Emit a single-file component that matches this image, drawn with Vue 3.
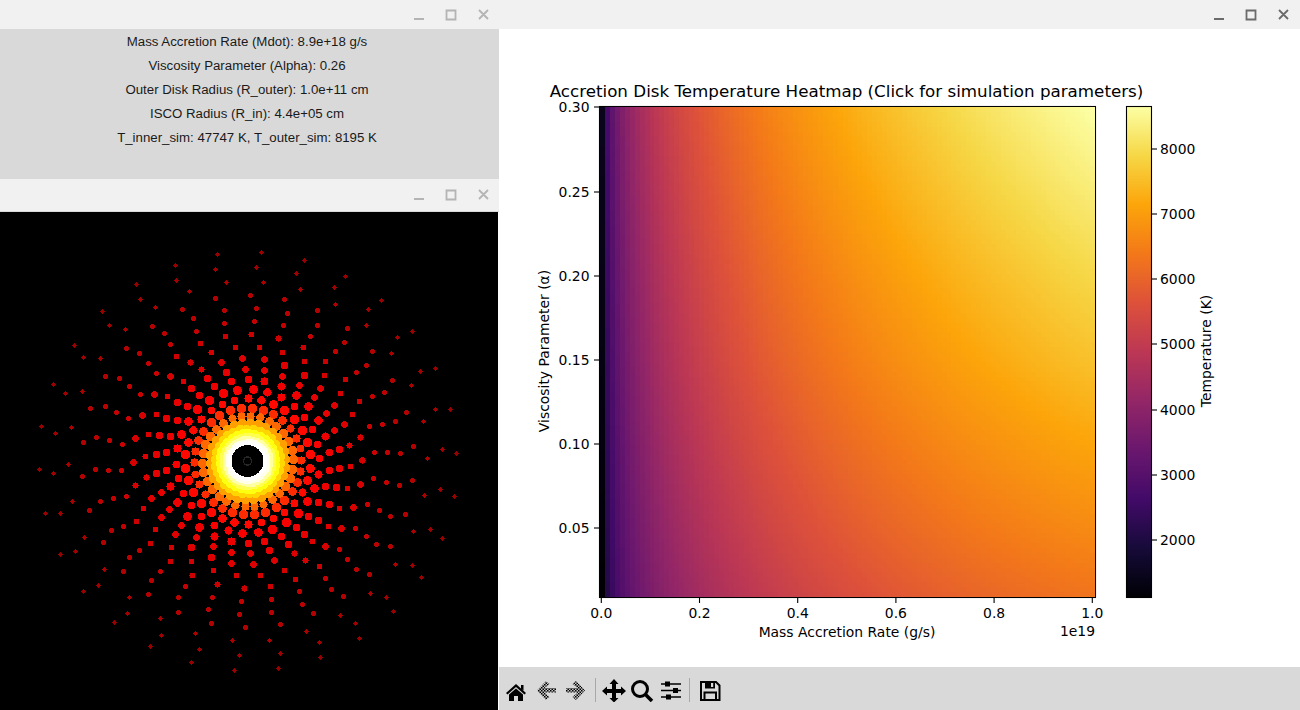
<template>
  <div class="desktop">
    <div class="left-col">
      <section class="window">
        <header class="titlebar">
          <svg class="controls dim" width="80" height="12" viewBox="0 0 80 12">
            <path d="M0 10h10M32.5 1.5h9v9h-9zM65 1l9 9M74 1l-9 9" />
          </svg>
        </header>
        <div class="info">
          <p v-for="line in infoLines" :key="line">{{ line }}</p>
        </div>
      </section>

      <section class="window grow">
        <header class="titlebar second">
          <svg class="controls dim" width="80" height="12" viewBox="0 0 80 12">
            <path d="M0 10h10M32.5 1.5h9v9h-9zM65 1l9 9M74 1l-9 9" />
          </svg>
        </header>
        <div class="disk">
          <svg width="498" height="498" viewBox="0 0 498 498" shape-rendering="crispEdges">
            <circle
              v-for="d in dots"
              :key="d.id"
              :cx="d.x"
              :cy="d.y"
              :r="d.size"
              :fill="d.color"
            />
            <circle cx="247.5" cy="249" r="20" fill="#ffffff" />
            <circle cx="247.5" cy="249" r="16" fill="#000000" />
            <circle cx="247.5" cy="249" r="4" fill="none" stroke="#262626" stroke-width="1.5" />
          </svg>
        </div>
      </section>
    </div>

    <section class="window main">
      <header class="titlebar main-bar">
        <svg class="controls" width="80" height="12" viewBox="0 0 80 12">
          <path d="M0 10h10M32.5 1.5h9v9h-9zM65 1l9 9M74 1l-9 9" />
        </svg>
      </header>

      <div class="figure">
        <svg class="axes" width="801" height="638" viewBox="499 29 801 638">
          <defs>
            <linearGradient id="inferno" x1="0" y1="1" x2="0" y2="0">
              <stop
                v-for="(c, i) in inferno"
                :key="c"
                :offset="i / (inferno.length - 1)"
                :stop-color="c"
              />
            </linearGradient>
          </defs>

          <text class="title" x="846.5" y="97" text-anchor="middle">Accretion Disk Temperature Heatmap (Click for simulation parameters)</text>

          <rect x="599.5" y="106.5" width="496" height="491" fill="none" stroke="#000" stroke-width="1.1" />
          <rect x="1126.5" y="106.5" width="25" height="491" fill="url(#inferno)" stroke="#000" stroke-width="1.1" />

          <g v-for="t in yTicks" :key="t.label">
            <path :d="`M594 ${t.y}h5`" stroke="#000" stroke-width="1.1" />
            <text x="589.5" :y="t.y + 5" text-anchor="end">{{ t.label }}</text>
          </g>
          <g v-for="t in xTicks" :key="t.label">
            <path :d="`M${t.x} 598v5`" stroke="#000" stroke-width="1.1" />
            <text :x="t.x" y="618" text-anchor="middle">{{ t.label }}</text>
          </g>
          <g v-for="t in barTicks" :key="t.label">
            <path :d="`M1152 ${t.y}h5`" stroke="#000" stroke-width="1.1" />
            <text x="1160" :y="t.y + 5" >{{ t.label }}</text>
          </g>

          <text x="847" y="637" text-anchor="middle">Mass Accretion Rate (g/s)</text>
          <text x="1095" y="636" text-anchor="end">1e19</text>
          <text transform="translate(549 351) rotate(-90)" text-anchor="middle">Viscosity Parameter (α)</text>
          <text transform="translate(1211 351) rotate(-90)" text-anchor="middle">Temperature (K)</text>
        </svg>
        <canvas ref="heat" class="heat" width="100" height="100"></canvas>
      </div>

      <footer class="toolbar">
        <svg class="tool home" width="24" height="24" viewBox="0 0 24 24">
          <path d="M12 6 22 15 20.5 16.5 12 9 3.500 16.500 2 15ZM17 7h2.500v5.500L17 10.500Z" />
          <path d="M5 16.500 12 10.500 19 16.500V23H14V18H10V23H5Z" />
        </svg>
        <svg class="tool back" width="24" height="24" viewBox="0 0 24 24">
          <defs>
            <pattern id="dither" width="3" height="3" patternUnits="userSpaceOnUse">
              <rect width="3" height="3" fill="#c4c4c4" />
              <rect width="1.500" height="1.500" fill="#000" />
              <rect x="1.500" y="1.500" width="1.500" height="1.500" fill="#000" />
            </pattern>
          </defs>
          <path fill="url(#dither)" d="M2 12.500 11 3 14.500 6 9.500 10H21V14.500H9.500L14.500 19 11 22Z" />
        </svg>
        <svg class="tool" width="24" height="24" viewBox="0 0 24 24">
          <path fill="url(#dither)" d="M22 12.500 13 3 9.500 6 14.500 10H3V14.500H14.500L9.500 19 13 22Z" />
        </svg>
        <span class="sep"></span>
        <svg class="tool move" width="24" height="24" viewBox="0 0 24 24">
          <path d="M12 1 16.500 6H14V11H19V8.500L24 13 19 17.500V15H14V20H16.500L12 24.500 7.500 20H10V15H5V17.500L0 13 5 8.500V11H10V6H7.500Z" />
        </svg>
        <svg class="tool zoom" width="24" height="24" viewBox="0 0 24 24">
          <circle cx="10" cy="11" r="7.500" fill="none" stroke="#000" stroke-width="3" />
          <path d="M15.500 16.500 22 23" stroke="#000" stroke-width="3.600" />
        </svg>
        <svg class="tool subplots" width="24" height="24" viewBox="0 0 24 24">
          <path d="M2 6h20M2 12.500h20M2 19h20" stroke="#000" stroke-width="1.300" />
          <rect x="6" y="3.500" width="5" height="5" />
          <rect x="14" y="10" width="5" height="5" />
          <rect x="7" y="16.500" width="5" height="5" />
        </svg>
        <span class="sep second-sep"></span>
        <svg class="tool save" width="24" height="24" viewBox="0 0 24 24">
          <path fill="none" stroke="#000" stroke-width="2" d="M3 4H18L21.500 7.500V22H3Z" />
          <path d="M7 3.500H17V10.500H7Z" />
          <rect x="13" y="5" width="2.200" height="4" fill="#d9d9d9" />
          <path fill="none" stroke="#000" stroke-width="2" d="M6.500 22V14.500H18V22" />
        </svg>
      </footer>
    </section>
  </div>
</template>

<script setup>
import { onMounted, ref } from 'vue'

const infoLines = [
  'Mass Accretion Rate (Mdot): 8.9e+18 g/s',
  'Viscosity Parameter (Alpha): 0.26',
  'Outer Disk Radius (R_outer): 1.0e+11 cm',
  'ISCO Radius (R_in): 4.4e+05 cm',
  'T_inner_sim: 47747 K, T_outer_sim: 8195 K'
]

const inferno = [
  '#000004', '#160b39', '#420a68', '#6a176e', '#932667', '#bc3754',
  '#dd513a', '#f37819', '#fca50a', '#f6d746', '#fcffa4'
]

const yTicks = [
  { label: '0.30', y: 107 },
  { label: '0.25', y: 192 },
  { label: '0.20', y: 276 },
  { label: '0.15', y: 360 },
  { label: '0.10', y: 444 },
  { label: '0.05', y: 528 }
]
const xTicks = ['0.0', '0.2', '0.4', '0.6', '0.8', '1.0'].map((label, i) => ({
  label,
  x: 601.3 + i * 98.2
}))
const barTicks = [2000, 3000, 4000, 5000, 6000, 7000, 8000].map((v) => ({
  label: String(v),
  y: Math.round(540 - ((v - 2000) / 1000) * 65.2)
}))

// radius and angular offset of each ring, read off the reference; 30 dots every 12deg
const rings = [
  [209, 9.7], [194.5, 8.4], [180, 11], [166, 6.7], [153, 9], [140, 8.5],
  [127, 7.8], [114.7, 11.7], [103, 3], [92, 4.2], [81.7, 6], [72, 10],
  [62.7, 6], [53.6, 10.5], [45.5, 9.5], [38, 9.5], [32.5, 4], [28, 8],
  [24, 2], [21, 7], [18, 3]
]

const colorStops = [
  [17, [255, 255, 255]], [20, [255, 255, 192]], [24, [255, 255, 80]],
  [29, [255, 255, 0]], [33, [255, 208, 0]], [38, [255, 160, 0]],
  [46, [255, 100, 0]], [54, [255, 40, 0]], [65, [255, 0, 0]],
  [80, [240, 0, 0]], [100, [224, 0, 0]], [127, [204, 0, 0]],
  [166, [179, 0, 0]], [209, [153, 0, 0]]
]

const ringColor = (r) => {
  for (let i = 1; i < colorStops.length; i++) {
    const [r1, c1] = colorStops[i]
    if (r <= r1) {
      const [r0, c0] = colorStops[i - 1]
      const t = Math.max(0, (r - r0) / (r1 - r0))
      const c = c0.map((v, k) => Math.round(v + (c1[k] - v) * t))
      return `rgb(${c[0]},${c[1]},${c[2]})`
    }
  }
  return 'rgb(153,0,0)'
}

const ringSize = (r) => {
  if (r < 40) return 4.6
  if (r < 72) return 4.6 - ((r - 40) / 32) * 0.4
  if (r < 103) return 4.2 - ((r - 72) / 31) * 1
  if (r < 140) return 3.2 - ((r - 103) / 37) * 0.7
  return 2.5 - ((r - 140) / 69) * 0.4
}

const dots = []
rings.forEach(([r, offset], ring) => {
  for (let i = 0; i < 30; i++) {
    const a = ((offset + i * 12) * Math.PI) / 180
    const wobble = r > 45 && r < 140 ? 1 + 0.1 * Math.sin(i * 12.9898 + ring * 78.233) : 1
    dots.push({
      id: `${ring}-${i}`,
      x: Math.round(247.5 - r * Math.cos(a)) + 0.5,
      y: Math.round(249 - r * Math.sin(a)) + 0.5,
      size: ringSize(r) * wobble,
      color: ringColor(r)
    })
  }
})

const heat = ref(null)

const hexToRgb = (h) => [1, 3, 5].map((i) => parseInt(h.slice(i, i + 2), 16))
const infernoRgb = inferno.map(hexToRgb)

const colormap = (t) => {
  const v = Math.min(1, Math.max(0, t)) * (infernoRgb.length - 1)
  const i = Math.min(infernoRgb.length - 2, Math.floor(v))
  const f = v - i
  return infernoRgb[i].map((c, k) => c + (infernoRgb[i + 1][k] - c) * f)
}

// relative temperature against alpha, measured down the right edge of the plot
const alphaCurve = [
  [0.01, 0.73], [0.05, 0.775], [0.1, 0.826], [0.15, 0.875],
  [0.2, 0.915], [0.25, 0.958], [0.3, 1]
]

const alphaFactor = (alpha) => {
  for (let i = 1; i < alphaCurve.length; i++) {
    const [a1, v1] = alphaCurve[i]
    if (alpha <= a1) {
      const [a0, v0] = alphaCurve[i - 1]
      return v0 + ((alpha - a0) / (a1 - a0)) * (v1 - v0)
    }
  }
  return 1
}

onMounted(() => {
  const ctx = heat.value.getContext('2d')
  const img = ctx.createImageData(100, 100)
  for (let row = 0; row < 100; row++) {
    const alpha = 0.3 - (row / 99) * 0.29
    for (let col = 0; col < 100; col++) {
      const mdot = 0.001 + (col / 99) * 0.999
      const bend = 0.8 + 0.2 * mdot * mdot
      const T = 8660 * Math.pow(mdot, 0.258) * Math.pow(alphaFactor(alpha), bend)
      const [r, g, b] = colormap((T - 1126) / (8660 - 1126))
      const p = (row * 100 + col) * 4
      img.data[p] = r
      img.data[p + 1] = g
      img.data[p + 2] = b
      img.data[p + 3] = 255
    }
  }
  ctx.putImageData(img, 0, 0)
})
</script>

<style scoped>
.desktop {
  display: flex;
  width: 1300px;
  height: 710px;
  overflow: hidden;
  background: #fff;
}

.left-col {
  display: flex;
  flex-direction: column;
  width: 499px;
  flex-shrink: 0;
}

.window {
  display: flex;
  flex-direction: column;
}

.grow {
  flex: 1;
  min-height: 0;
}

.main {
  flex: 1;
  min-width: 0;
}

.titlebar {
  display: flex;
  align-items: center;
  justify-content: flex-end;
  flex-shrink: 0;
  height: 29px;
  padding-right: 5px;
  background: #f1f1f1;
}

.titlebar.second {
  height: 33px;
  padding-bottom: 1px;
  border-bottom: 1px solid #d8d8d8;
  box-sizing: border-box;
}

.titlebar.main-bar {
  padding-right: 6px;
}

.controls {
  fill: none;
  stroke: #6b6b6b;
  stroke-width: 1.8;
}

.controls.dim {
  stroke: #b4b4b4;
}

.info {
  height: 150px;
  box-sizing: border-box;
  padding: 1px 5px 0 0;
  background: #d9d9d9;
  font-family: "Liberation Sans", Arial, sans-serif;
  font-size: 13.25px;
  color: #1a1a1a;
  text-align: center;
}

.info p {
  margin: 0;
  height: 24px;
  line-height: 24px;
}

.disk {
  flex: 1;
  width: 498px;
  background: #000;
  overflow: hidden;
}

.disk svg {
  display: block;
}

.figure {
  position: relative;
  height: 638px;
  background: #fff;
}

.axes {
  display: block;
  font-family: "DejaVu Sans", sans-serif;
  font-size: 13.9px;
  fill: #000;
}

.axes .title {
  font-size: 16.72px;
}

/* sits over the axes frame drawn in the svg */
.heat {
  position: absolute;
  left: 101px;
  top: 78px;
  width: 495px;
  height: 490px;
  image-rendering: pixelated;
}

.toolbar {
  display: flex;
  align-items: center;
  height: 43px;
  box-sizing: border-box;
  padding: 3px 0 0 3px;
  background: #d9d9d9;
}

.tool {
  flex-shrink: 0;
  margin: 0 2px;
}

.back {
  margin-left: 5px;
}

.sep {
  width: 1px;
  height: 24px;
  margin: 0 4px 0 6px;
  background: #a8a8a8;
}

.second-sep {
  margin: 0 5px 0 4px;
}

.subplots {
  margin-left: 3px;
}

.save {
  margin-left: 3px;
}
</style>

<style>
html,
body {
  margin: 0;
  background: #fff;
}
</style>
